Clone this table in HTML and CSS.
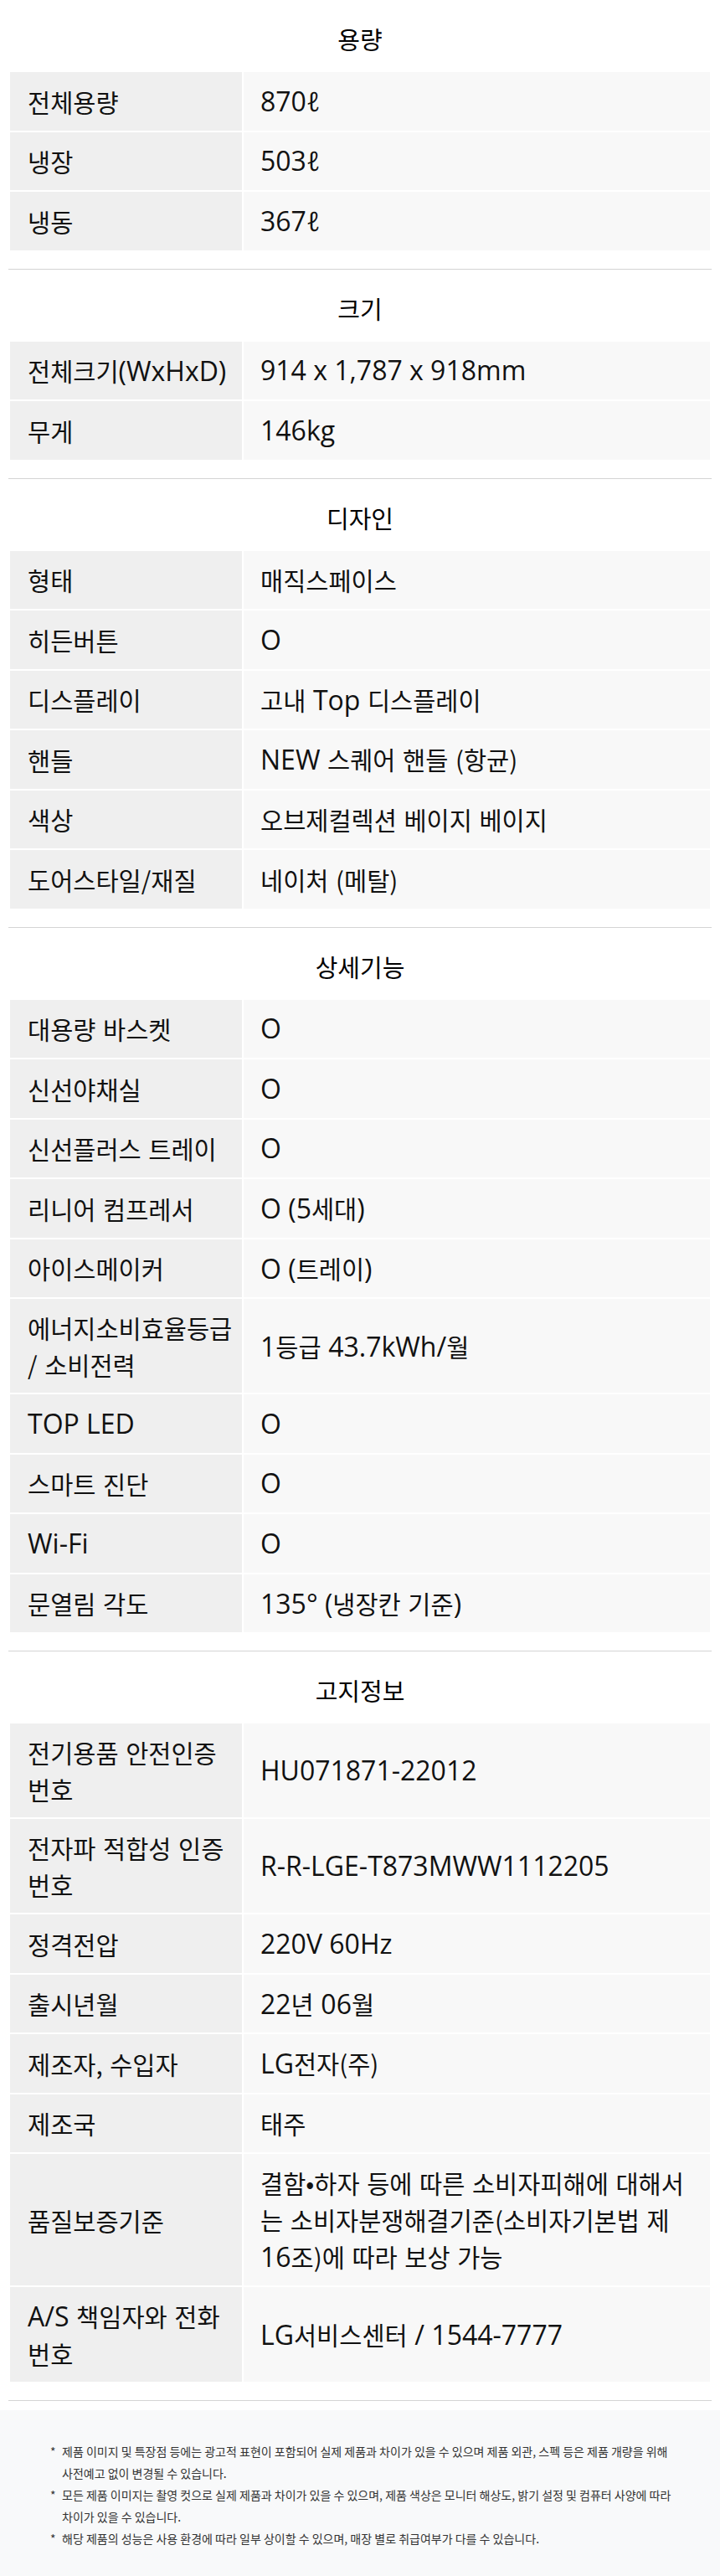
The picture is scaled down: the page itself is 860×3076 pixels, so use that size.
FILE: index.html
```html
<html>
    <head>
        <meta charset="utf-8">
        <title>제품 스펙</title>
        <meta name="viewport" content="width=device-width, initial-scale=1.0">
        <link rel="stylesheet" href="styles.css">
    </head>
    <body>
        <section class="spec">
            <h2 class="spec-title">용량</h2>
            <table class="spec-table">
                <tr><th>전체용량</th><td><span class="en">870ℓ</span></td></tr>
                <tr><th>냉장</th><td><span class="en">503ℓ</span></td></tr>
                <tr><th>냉동</th><td><span class="en">367ℓ</span></td></tr>
            </table>
        </section>
        <section class="spec">
            <h2 class="spec-title">크기</h2>
            <table class="spec-table">
                <tr><th>전체크기<span class="en">(WxHxD)</span></th><td><span class="en">914 x 1,787 x 918mm</span></td></tr>
                <tr><th>무게</th><td><span class="en">146kg</span></td></tr>
            </table>
        </section>
        <section class="spec">
            <h2 class="spec-title">디자인</h2>
            <table class="spec-table">
                <tr><th>형태</th><td>매직스페이스</td></tr>
                <tr><th>히든버튼</th><td><span class="en">O</span></td></tr>
                <tr><th>디스플레이</th><td>고내 <span class="en">Top</span> 디스플레이</td></tr>
                <tr><th>핸들</th><td><span class="en">NEW</span> 스퀘어 핸들 (항균)</td></tr>
                <tr><th>색상</th><td>오브제컬렉션 베이지 베이지</td></tr>
                <tr><th>도어스타일/재질</th><td>네이처 (메탈)</td></tr>
            </table>
        </section>
        <section class="spec">
            <h2 class="spec-title">상세기능</h2>
            <table class="spec-table">
                <tr><th>대용량 바스켓</th><td><span class="en">O</span></td></tr>
                <tr><th>신선야채실</th><td><span class="en">O</span></td></tr>
                <tr><th>신선플러스 트레이</th><td><span class="en">O</span></td></tr>
                <tr><th>리니어 컴프레서</th><td><span class="en">O (5</span>세대<span class="en">)</span></td></tr>
                <tr><th>아이스메이커</th><td><span class="en">O (</span>트레이<span class="en">)</span></td></tr>
                <tr><th>에너지소비효율등급<br>/ 소비전력</th><td><span class="en">1</span>등급 <span class="en">43.7kWh/</span>월</td></tr>
                <tr><th><span class="en">TOP LED</span></th><td><span class="en">O</span></td></tr>
                <tr><th>스마트 진단</th><td><span class="en">O</span></td></tr>
                <tr><th><span class="en">Wi-Fi</span></th><td><span class="en">O</span></td></tr>
                <tr><th>문열림 각도</th><td><span class="en">135° (</span>냉장칸 기준<span class="en">)</span></td></tr>
            </table>
        </section>
        <section class="spec">
            <h2 class="spec-title">고지정보</h2>
            <table class="spec-table">
                <tr><th>전기용품 안전인증<br>번호</th><td><span class="en">HU071871-22012</span></td></tr>
                <tr><th>전자파 적합성 인증<br>번호</th><td><span class="en">R-R-LGE-T873MWW1112205</span></td></tr>
                <tr><th>정격전압</th><td><span class="en">220V 60Hz</span></td></tr>
                <tr><th>출시년월</th><td><span class="en">22</span>년 <span class="en">06</span>월</td></tr>
                <tr><th>제조자, 수입자</th><td><span class="en">LG</span>전자(주)</td></tr>
                <tr><th>제조국</th><td>태주</td></tr>
                <tr><th>품질보증기준</th><td>결함•하자 등에 따른 소비자피해에 대해서<br>는 소비자분쟁해결기준(소비자기본법 제<br><span class="en">16</span>조)에 따라 보상 가능</td></tr>
                <tr><th><span class="en">A/S</span> 책임자와 전화<br>번호</th><td><span class="en">LG</span>서비스센터 <span class="en">/ 1544-7777</span></td></tr>
            </table>
        </section>
        <div class="notice">
            <ul>
                <li>제품 이미지 및 특장점 등에는 광고적 표현이 포함되어 실제 제품과 차이가 있을 수 있으며 제품 외관, 스펙 등은 제품 개량을 위해 사전예고 없이 변경될 수 있습니다.</li>
                <li>모든 제품 이미지는 촬영 컷으로 실제 제품과 차이가 있을 수 있으며, 제품 색상은 모니터 해상도, 밝기 설정 및 컴퓨터 사양에 따라 차이가 있을 수 있습니다.</li>
                <li>해당 제품의 성능은 사용 환경에 따라 일부 상이할 수 있으며, 매장 별로 취급여부가 다를 수 있습니다.</li>
            </ul>
        </div>
    </body>
</html>
```

FILE: styles.css
```css
        html {
            cursor: default;
        }
        body {
            margin: 0;
            background: #FFF;
            color: #111;
            font-family: "Noto Sans CJK KR", sans-serif;
        }
        .spec {
            margin: 0 10px;
            border-bottom: 1px solid #D4D4D4;
        }
        .spec-title {
            margin: 0;
            padding: 32px 0 24px;
            font-size: 29px;
            line-height: 28px;
            font-weight: normal;
            text-align: center;
            color: #000;
        }
        .spec-table {
            width: 100%;
            border-collapse: separate;
            border-spacing: 2px;
            margin-bottom: 20px;
        }
        .spec-table tr {
            height: 69.5px;
        }
        .spec-table th, .spec-table td {
            font-size: 29.5px;
            line-height: 44px;
            word-spacing: 2px;
            font-weight: normal;
            text-align: left;
            vertical-align: middle;
        }
        .spec-table th {
            width: 256px;
            padding: 12px 0 12px 21px;
            background: #EFEFEF;
        }
        .spec-table td {
            padding: 12px 21px 12px 20px;
            background: #F8F8F8;
        }
        /* latin runs sit larger than hangul in the original font */
        .en {
            font-family: "Open Sans", "DejaVu Sans", sans-serif;
            font-size: 32px;
            word-spacing: 0;
        }
        .notice {
            margin-top: 11px;
            padding: 36px 50px 35px 60px;
            background: #F8F9FA;
        }
        .notice ul {
            margin: 0;
            padding: 0;
            list-style: none;
        }
        .notice li {
            padding-left: 14px;
            text-indent: -14px;
            font-size: 14px;
            line-height: 26px;
            word-break: keep-all;
            color: #333;
        }
        .notice li::before {
            content: "*";
            display: inline-block;
            width: 14px;
            text-indent: 0;
        }
```
